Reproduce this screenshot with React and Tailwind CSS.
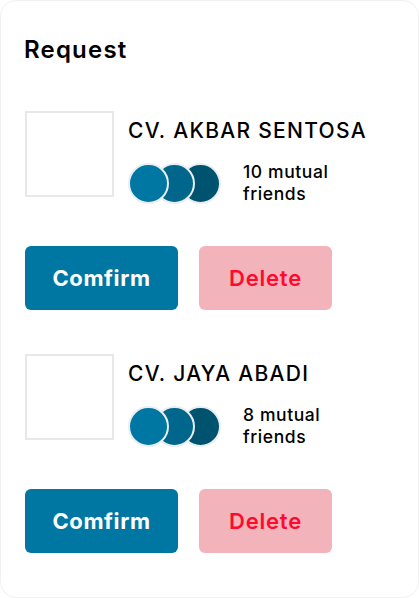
const requests = [
  { name: "CV. AKBAR SENTOSA", mutual: "10 mutual" },
  { name: "CV. JAYA ABADI", mutual: "8 mutual" },
];

function MutualAvatars() {
  return (
    <div className="flex items-center">
      <div className="z-30 h-[41px] w-[41px] rounded-full border-2 border-[#e9eef1] bg-[#0077a3]" />
      <div className="z-20 -ml-[15px] h-[41px] w-[41px] rounded-full border-2 border-[#e9eef1] bg-[#00668c]" />
      <div className="z-10 -ml-[15px] h-[41px] w-[41px] rounded-full border-2 border-[#e9eef1] bg-[#00536f]" />
    </div>
  );
}

export default function App() {
  return (
    <div className="min-h-screen bg-white" style={{ fontFamily: "Inter, 'Noto Sans', sans-serif" }}>
      <div className="h-[598px] w-[419px] rounded-2xl border border-[#f1f1f1] bg-white pl-[23px] pr-6 pt-[33px]">
        <h2 className="text-[24px] font-semibold leading-[32px] tracking-[1.2px] text-black">Request</h2>

        <div className="mt-[45px] flex flex-col gap-[44px]">
          {requests.map((r) => (
            <div key={r.name}>
              <div className="flex gap-[14px] pl-[1px]">
                <div className="h-[86px] w-[89px] border-2 border-[#e8e8e8] bg-white" />
                <div className="pt-[8px]">
                  <p className="text-[21px] font-medium leading-[24px] tracking-[1.3px] text-black">{r.name}</p>
                  <div className="mt-[18px] flex items-center gap-[22px]">
                    <MutualAvatars />
                    <p className="text-[17.5px] font-medium leading-[22px] tracking-[0.6px] text-black">
                      {r.mutual}
                      <br />
                      friends
                    </p>
                  </div>
                </div>
              </div>
              <div className="mt-[41px] flex gap-[21px] pl-[1px]">
                <button className="h-[64px] w-[153px] rounded-md bg-[#0077a3] text-[22px] font-bold tracking-[0.6px] text-white">
                  Comfirm
                </button>
                <button className="h-[64px] w-[133px] rounded-md bg-[#f3b3bb] text-[22px] font-semibold tracking-[0.8px] text-[#ff0a2e]">
                  Delete
                </button>
              </div>
            </div>
          ))}
        </div>
      </div>
    </div>
  );
}
